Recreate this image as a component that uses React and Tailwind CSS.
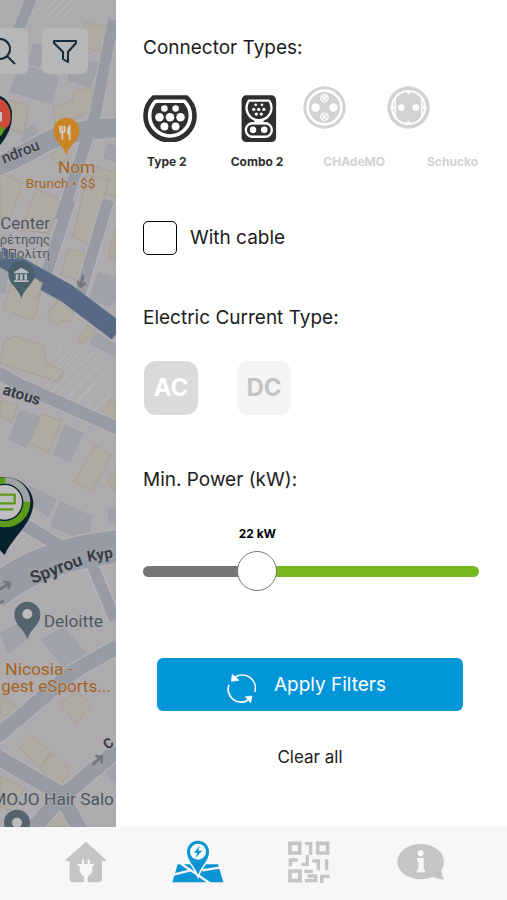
import React, { useState } from 'react';

const MAX_POWER = 69;

const homes = [
  '255,68 332,84 315,160 250,140',
  '30,300 85,318 72,400 20,385',
  '160,320 215,305 225,275 280,262 268,330 240,350 165,372',
  '150,465 190,440 205,470 180,500',
  '290,500 348,520 348,590 275,565',
  '0,520 70,548 30,655 0,650',
  '110,565 185,605 145,700 60,690',
  '262,525 328,540 268,732 218,712',
  '205,745 255,760 235,840 182,825',
  '345,690 348,780 325,770',
  '40,835 125,860 105,950 85,958 10,925',
  '15,1020 45,1008 130,1038 140,1090 190,1112 178,1145 0,1090',
  '0,1200 52,1215 38,1262 0,1250',
  '125,1242 185,1262 145,1358 88,1330',
  '285,1335 335,1365 275,1475 222,1445',
  '330,1200 348,1200 348,1270 308,1255',
  '348,1410 348,1475 320,1445',
  '0,2080 60,2130 10,2150 0,2140',
  '230,2075 275,2115 228,2170 180,2110',
  '92,2205 152,2255 122,2302 58,2245',
  '155,2260 212,2310 180,2360 118,2305',
  '0,2330 50,2350 72,2370 30,2430 0,2420',
  '160,2435 210,2470 200,2481 130,2481',
];

const blocks = [
  '100,130 128,140 118,200 88,192',
  '60,200 100,205 176,232 155,310 30,275',
  '215,175 298,190 270,262 205,240',
  '75,392 100,375 115,395 110,410 65,425',
  '325,430 348,440 348,485 312,475',
  '0,800 25,810 15,880 0,875',
  '295,818 348,835 348,900 325,918 268,895',
  '290,1000 348,1035 348,1070 270,1030',
  '60,1232 118,1250 78,1342 28,1318',
  '195,1275 248,1300 210,1385 162,1362',
  '90,1458 168,1498 145,1550 70,1500',
  '180,1505 278,1550 262,1610 235,1612 152,1578',
  '322,1530 348,1525 348,1570 328,1565',
  '0,1900 60,1870 85,1915 25,1958',
  '125,1920 190,1880 262,1965 200,2012',
  '320,2290 348,2260 348,2350 312,2310',
];

const MapPin = ({ x, y, color }) => (
  <path
    transform={`translate(${x} ${y})`}
    d="M0 72 C-8 40 -39 30 -39 -2 A39 39 0 0 1 39 -2 C39 30 8 40 0 72Z"
    fill={color}
  />
);

const CityMap = () => (
  <svg
    className="w-full"
    viewBox="0 0 348 2481"
    preserveAspectRatio="xMinYMin slice"
    fontFamily="Roboto, sans-serif"
    role="img"
    aria-label="Map of Nicosia"
  >
    <rect width="348" height="2481" fill="#aeabae" />

    <g fill="#9fa2a9" stroke="#989ca4" strokeWidth="2">
      {blocks.map((points) => <polygon key={points} points={points} />)}
    </g>
    <g fill="#aeaba2" stroke="#a09a87" strokeWidth="2">
      {homes.map((points) => <polygon key={points} points={points} />)}
    </g>

    {/* Hatched parking areas */}
    <g stroke="#b9b8ba" strokeWidth="3">
      <path d="M110 30l30-30M125 42l42-42M145 48l48-48M168 50l45-50M190 52l30-34M212 54l16-20" />
      <path d="M170 1060l15-20M170 1095l45-50M150 1130l85-85M132 1165l125-125M150 1180l130-125M175 1185l122-118M205 1190l105-105M235 1200l75-80" />
      <path d="M190 1210l45-50M215 1222l70-70M242 1235l75-75M270 1245l60-60" />
      <path d="M15 1660l80-90M0 1650l60-100M45 1645l60-60M75 1635l55-45" />
    </g>

    {/* Streets */}
    <g fill="none" stroke="#b3b2b5" strokeLinejoin="round">
      <path strokeWidth="40" d="M93-5L55 90M340 60L285 345L180 660" />
      <path strokeWidth="66" d="M-10 500Q60 470 130 430T353 383" />
      <path strokeWidth="42" d="M210 600L130 850M325 600L235 900" />
      <path strokeWidth="46" d="M-5 1118L70 1160L353 1285M75 1575L185 1642M275 1690L345 1860" />
      <path strokeWidth="52" d="M353 1940L220 2015L-10 2210" />
      <path strokeWidth="54" d="M-10 2270L180 2380L240 2490M353 2250L180 2395L95 2490" />
      <path strokeWidth="106" d="M-20 1780Q130 1660 353 1640" />
    </g>
    <g fill="none" stroke="#969ba4" strokeLinejoin="round">
      <path strokeWidth="34" d="M93-5L55 90M340 60L285 345L180 660" />
      <path strokeWidth="58" d="M-10 500Q60 470 130 430T353 383" />
      <path strokeWidth="34" d="M210 600L130 850M325 600L235 900" />
      <path strokeWidth="38" d="M-5 1118L70 1160L353 1285M75 1575L185 1642" />
      <path strokeWidth="34" d="M275 1690L345 1860" />
      <path strokeWidth="44" d="M353 1940L220 2015L-10 2210" />
      <path strokeWidth="46" d="M-10 2270L180 2380L240 2490M353 2250L180 2395L95 2490" />
      <path strokeWidth="98" d="M-20 1780Q130 1660 353 1640" />
    </g>
    <path d="M-5 766L200 880L353 995" fill="none" stroke="#586985" strokeWidth="58" />
    <path d="M105 835l22 14-14 48-42-20Z M170 900l52 40-17 25-17-5-8 18-38-28 8-25 15-3Z M262 975l23 15-10 25-15-3-10 20-17-10 7-20 10-2Z" fill="#aeaba2" stroke="#a09a87" strokeWidth="2" />

    {/* One way arrows */}
    <g fill="none" stroke="#74787d" strokeWidth="8">
      <path d="M250 825l-8 32M232 843l10 17 15-11" />
      <path d="M0 1768l28-18M10 1745l20 4-5 18M-4 1810l16-8" />
      <path d="M278 2295l24-23M286 2268l19 2 0 20" />
    </g>

    {/* Street names */}
    <g fill="#3a3d47" stroke="#a6a7ab" strokeWidth="4" paintOrder="stroke" fontWeight="700">
      <text x="122" y="447" fontSize="46" fontWeight="500" textAnchor="end" transform="rotate(-22 122 447)">ndrou</text>
      <text x="6" y="1182" fontSize="46" transform="rotate(17 6 1182)">atous</text>
      <text x="98" y="1752" fontSize="52" transform="rotate(-21 98 1752)">Spyrou</text>
      <text x="264" y="1686" fontSize="46" transform="rotate(-10 264 1686)">Kyp</text>
      <text x="322" y="2250" fontSize="42" transform="rotate(-35 322 2250)">C</text>
    </g>

    {/* Places */}
    <g fill="#a3621f" stroke="#b0adaf" strokeWidth="4" paintOrder="stroke">
      <text x="286" y="518" fontSize="52" textAnchor="end">Nom</text>
      <text x="286" y="564" fontSize="41" textAnchor="end">Brunch • $$</text>
      <text x="16" y="2026" fontSize="52">Nicosia -</text>
      <text x="332" y="2077" fontSize="51" textAnchor="end">gest eSports...</text>
    </g>
    <g fill="#4d5860" stroke="#b0adaf" strokeWidth="4" paintOrder="stroke">
      <text x="150" y="687" fontSize="51" textAnchor="end">Center</text>
      <text x="150" y="731" fontSize="39" textAnchor="end">ρέτησης</text>
      <text x="150" y="773" fontSize="39" textAnchor="end">ι Πολίτη</text>
      <text x="131" y="1882" fontSize="52">Deloitte</text>
      <text x="342" y="2415" fontSize="52" textAnchor="end">MOJO Hair Salo</text>
    </g>

    <MapPin x={199} y={394} color="#c98425" />
    <g fill="none" stroke="#d2cec8" strokeWidth="5">
      <path d="M180 377v14q0 7 7 7t7-7v-14M187 377v42" />
      <path d="M209 419V379q-6 6-5 22h5" fill="#d2cec8" />
    </g>
    <MapPin x={64} y={824} color="#4a606a" />
    <path d="M42 816l22-13 22 13v4H42ZM47 823h8v16h-8ZM60 823h8v16h-8ZM73 823h8v16h-8ZM42 841h44v5H42Z" fill="#b9bcbe" />
    <MapPin x={82} y={1846} color="#55636e" />
    <circle cx="82" cy="1842" r="15" fill="#bcbabc" />
    <MapPin x={51} y={2470} color="#55636e" />
    <circle cx="51" cy="2468" r="15" fill="#bcbabc" />

    {/* Charging stations */}
    <path d="M0 436Q36 390 36 350A52 60 0 0 0 0 288Z" fill="#06222f" />
    <path d="M0 296A44 56 0 0 1 28 374L12 392 0 380Z" fill="#cd4a3a" />
    <path d="M0 378l14 8Q8 404 0 408Z" fill="#5d9a18" />
    <path d="M0 336h6v28H0Z" fill="#c3c3c3" />

    <path d="M14 1665C38 1610 100 1570 100 1507A84 84 0 0 0-60 1480V1590Z" fill="#06222f" />
    <circle cx="16" cy="1507" r="75" fill="#5d9a18" />
    <path d="M16 1432A75 75 0 0 1 91 1505H70A56 56 0 0 0 16 1451Z" fill="#9fa1a6" />
    <circle cx="14" cy="1507" r="54" fill="#bebec0" stroke="#06222f" strokeWidth="4" />
    <path d="M-10 1484H44V1510H-10M-10 1528H40" fill="none" stroke="#5d9a18" strokeWidth="7" strokeLinejoin="round" />
  </svg>
);

const Type2Icon = () => (
  <svg className="h-[47px] w-[54px]" viewBox="38 74 162 143" aria-hidden="true">
    <path d="M68 77H170A79 79 0 1 1 68 77Z" fill="#2f2f30" stroke="#2f2f30" strokeWidth="5" strokeLinejoin="round" />
    <path d="M75 93H163A62 62 0 1 1 75 93Z" fill="none" stroke="#fff" strokeWidth="11" strokeLinejoin="round" />
    <g fill="#fff">
      <circle cx="102" cy="115" r="10" />
      <circle cx="136" cy="115" r="10" />
      <circle cx="87" cy="142" r="13" />
      <circle cx="119" cy="142" r="13" />
      <circle cx="151" cy="142" r="13" />
      <circle cx="102" cy="170" r="12" />
      <circle cx="136" cy="170" r="12" />
    </g>
  </svg>
);

const Combo2Icon = () => (
  <svg className="h-[47px] w-9" viewBox="335 74 108 143" aria-hidden="true">
    <rect x="336" y="75" width="105" height="142" rx="14" fill="#2f2f30" />
    <g fill="none" stroke="#fff" strokeWidth="7" strokeLinejoin="round">
      <path d="M358 91H420A38 38 0 1 1 358 91Z" />
      <rect x="349" y="160" width="79" height="41" rx="20" />
    </g>
    <path d="M370 148H408Q396 155 408 163H370Q382 155 370 148Z" fill="#fff" />
    <g fill="#fff">
      <circle cx="379" cy="104" r="4" />
      <circle cx="398" cy="104" r="4" />
      <circle cx="373" cy="118" r="5" />
      <circle cx="388" cy="118" r="5" />
      <circle cx="404" cy="118" r="5" />
      <circle cx="381" cy="132" r="5" />
      <circle cx="396" cy="132" r="5" />
      <circle cx="371" cy="180" r="10" />
      <circle cx="405" cy="180" r="10" />
    </g>
  </svg>
);

const ChademoIcon = () => (
  <svg className="size-[43px]" viewBox="-65 -65 130 130" aria-hidden="true">
    <circle r="64" fill="#d2d2d2" />
    <circle r="51" fill="none" stroke="#fff" strokeWidth="8" />
    <circle cx="-27" r="13" fill="#fff" />
    <circle cx="27" r="13" fill="#fff" />
    <g fill="#d2d2d2" stroke="#fff" strokeWidth="4">
      <circle cy="-28" r="11" />
      <circle cy="28" r="11" />
      <path d="M-6-34L6-22M6-34L-6-22M-6 22L6 34M6 22L-6 34" />
    </g>
  </svg>
);

const SchuckoIcon = () => (
  <svg className="size-[43px]" viewBox="-65 -65 130 130" aria-hidden="true">
    <circle r="64" fill="#d2d2d2" />
    <circle r="50" fill="none" stroke="#fff" strokeWidth="6" />
    <path d="M-40-30V30M40-30V30" stroke="#fff" strokeWidth="5" />
    <g fill="#fff">
      <circle cx="-22" r="10" />
      <circle cx="22" r="10" />
      <circle cx="-49" r="6" />
      <circle cx="49" r="6" />
      <path d="M-8-49H8L0-38ZM-8 49H8L0 38Z" />
    </g>
  </svg>
);

const RefreshIcon = () => (
  <svg className="size-8" viewBox="257 98 96 96" fill="none" stroke="#fff" strokeWidth="5" aria-hidden="true">
    <path d="M285 110A39 39 0 0 1 343 155M266 133A39 39 0 0 0 324 179" />
    <path d="M276 102L273 123 296 120ZM315 169L335 167 331 188Z" fill="#fff" strokeWidth="2" strokeLinejoin="round" />
  </svg>
);

const HomeIcon = () => (
  <svg className="size-[42px]" viewBox="76 46 126 126" aria-hidden="true">
    <path d="M139 48L199 102Q200 106 196 106H187V160Q187 170 177 170H100Q90 170 90 160V106H81Q77 106 78 102Z" fill="#c5c5c5" />
    <path d="M130 104V118M147 104V118" stroke="#f7f7f7" strokeWidth="6" strokeLinecap="round" />
    <path d="M114 115H163V121H158V132Q156 148 144 151V172H133V151Q122 148 120 132V121H114Z" fill="#f7f7f7" />
  </svg>
);

const StationsIcon = () => (
  <svg className="h-[43px] w-[52px]" viewBox="395 46 156 129" aria-hidden="true">
    <path d="M412 119H533L549 173H396Z" fill="#0a94d3" />
    <g fill="none" stroke="#f7f7f7" strokeWidth="7">
      <path d="M422 117L456 140L512 178M400 150L450 137M486 137L542 128" />
    </g>
    <path d="M473 150C462 122 440 108 440 81A33 33 0 0 1 506 81C506 108 484 122 473 150Z" fill="#0a94d3" stroke="#f7f7f7" strokeWidth="10" paintOrder="stroke" />
    <circle cx="473" cy="81" r="24" fill="#f7f7f7" />
    <path d="M478 63L461 84H471L466 100 485 78H474Z" fill="#0a94d3" />
  </svg>
);

const QrIcon = () => (
  <svg className="size-[42px]" viewBox="90 50 126 126" fill="none" stroke="#c5c5c5" strokeWidth="10" aria-hidden="true">
    <path d="M96 57H125V86H96ZM179 57H209V86H179ZM96 140H126V169H96Z" strokeWidth="11" />
    <path d="M141 58H158V91M97 126V107H119M148 92V120H130M163 110H181V138M206 105V138M139 141H165M149 155H168M141 169H173V150M191 176V156H215" />
  </svg>
);

const InfoIcon = () => (
  <svg className="h-10 w-12" viewBox="409 52 144 116" aria-hidden="true">
    <ellipse cx="480" cy="109" rx="70" ry="53" fill="#c5c5c5" />
    <path d="M542 132Q542 152 551 163Q528 162 512 152Z" fill="#c5c5c5" />
    <circle cx="480" cy="84" r="9" fill="#f7f7f7" />
    <path d="M469 98H489V133H493V141H468V133H473V106H469Z" fill="#f7f7f7" />
  </svg>
);

const navItems = [
  { label: 'Home', Icon: HomeIcon },
  { label: 'Stations', Icon: StationsIcon },
  { label: 'Scan QR', Icon: QrIcon },
  { label: 'Info', Icon: InfoIcon },
];

const App = () => {
  const [withCable, setWithCable] = useState(false);
  const [power, setPower] = useState(22);

  const ratio = power / MAX_POWER;
  const thumbCenter = `calc(20px + (100% - 40px) * ${ratio})`;

  return (
    <div className="flex min-h-screen flex-col bg-white font-['Inter',sans-serif] text-[#1c1c1c]">
      <div className="flex flex-1">
        {/* Dimmed map behind the panel */}
        <aside className="relative flex w-[116px] shrink-0 overflow-hidden bg-[#aeabae]">
          <CityMap />
          <button
            type="button"
            aria-label="Search"
            className="absolute top-7 -left-[18px] flex size-[46px] items-center justify-center rounded-md bg-[#b7b7b8] pr-1"
          >
            <svg className="size-7" viewBox="0 0 28 28" fill="none" stroke="#152c38" strokeWidth="2" aria-hidden="true">
              <circle cx="11" cy="12" r="10" />
              <path d="M18 19l8 8" />
            </svg>
          </button>
          <button
            type="button"
            aria-label="Filter"
            className="absolute top-7 left-[42px] flex size-[46px] items-center justify-center rounded-md bg-[#b7b7b8]"
          >
            <svg className="size-7" viewBox="0 0 28 28" fill="none" stroke="#152c38" strokeWidth="2" strokeLinejoin="round" aria-hidden="true">
              <path d="M3 4H25V6L17 15V25L12 22V15L3 6Z" />
            </svg>
          </button>
        </aside>

        {/* Filters */}
        <main className="flex-1 pt-[34px] pr-7 pb-14 pl-[27px]">
          <h2 className="text-[19px] leading-7">Connector Types:</h2>
          <div className="mt-6 grid grid-cols-[87fr_73fr_84fr_92fr] text-[12px] leading-4 font-bold">
            <button type="button" aria-pressed="true" className="flex w-[54px] flex-col items-start text-[#2f2f30]">
              <span className="flex h-14 items-end"><Type2Icon /></span>
              <span className="mt-3 pl-1 whitespace-nowrap">Type 2</span>
            </button>
            <button type="button" aria-pressed="true" className="flex w-[54px] flex-col items-center text-[#2f2f30]">
              <span className="flex h-14 items-end pl-1"><Combo2Icon /></span>
              <span className="mt-3 whitespace-nowrap">Combo 2</span>
            </button>
            <button type="button" aria-pressed="false" className="flex w-[82px] flex-col items-start text-[#d2d2d2]">
              <span className="h-14"><ChademoIcon /></span>
              <span className="mt-3 self-end">CHAdeMO</span>
            </button>
            <button type="button" aria-pressed="false" className="flex flex-col items-start text-[#d2d2d2]">
              <span className="h-14"><SchuckoIcon /></span>
              <span className="mt-3 self-end pr-px">Schucko</span>
            </button>
          </div>

          <label className="mt-[51px] flex items-center gap-[13px] text-[19px] leading-7">
            <input
              type="checkbox"
              checked={withCable}
              onChange={(e) => setWithCable(e.target.checked)}
              className="size-[34px] appearance-none rounded-[5px] border border-black checked:bg-[#333]"
            />
            With cable
          </label>

          <h2 className="mt-[49px] text-[19px] leading-7">Electric Current Type:</h2>
          <div className="mt-[29px] flex gap-[39px] pl-px text-[24px] leading-8 font-bold">
            <button type="button" className="size-[54px] rounded-xl bg-[#dadada] text-white">AC</button>
            <button type="button" className="size-[54px] rounded-xl bg-[#f4f4f4] text-[#c4c4c4]">DC</button>
          </div>

          <h2 className="mt-[51px] text-[19px] leading-7">
            <label htmlFor="power">Min. Power (kW):</label>
          </h2>
          <output
            htmlFor="power"
            className="mt-8 block w-max -translate-x-1/2 text-[12px] leading-4 font-bold text-black"
            style={{ marginLeft: thumbCenter }}
          >
            {power} kW
          </output>
          <div className="mt-[9px] flex h-10 items-center">
            <input
              id="power"
              type="range"
              min="0"
              max={MAX_POWER}
              value={power}
              onChange={(e) => setPower(Number(e.target.value))}
              className="h-[11px] w-full appearance-none rounded-full [&::-webkit-slider-thumb]:size-10 [&::-webkit-slider-thumb]:appearance-none [&::-webkit-slider-thumb]:rounded-full [&::-webkit-slider-thumb]:border [&::-webkit-slider-thumb]:border-[#777] [&::-webkit-slider-thumb]:bg-white"
              style={{ background: `linear-gradient(to right, #767676 ${ratio * 100}%, #76b921 ${ratio * 100}%)` }}
            />
          </div>

          <div className="mt-[67px] flex flex-col items-center pr-4 pl-[14px]">
            <button
              type="button"
              className="flex h-[53px] w-full items-center justify-center gap-4 rounded-md bg-[#0295d8] pr-2 text-[19px] leading-7 text-white"
            >
              <span className="pt-2"><RefreshIcon /></span>
              Apply Filters
            </button>
            <button type="button" className="mt-[34px] text-[17px] leading-6">Clear all</button>
          </div>
        </main>
      </div>

      <nav className="flex h-[73px] items-center justify-around bg-[#f7f7f7] px-[30px] pb-1">
        {navItems.map(({ label, Icon }) => (
          <a key={label} href="#" aria-label={label} className="flex w-14 justify-center">
            <Icon />
          </a>
        ))}
      </nav>
    </div>
  );
};

export default App;
